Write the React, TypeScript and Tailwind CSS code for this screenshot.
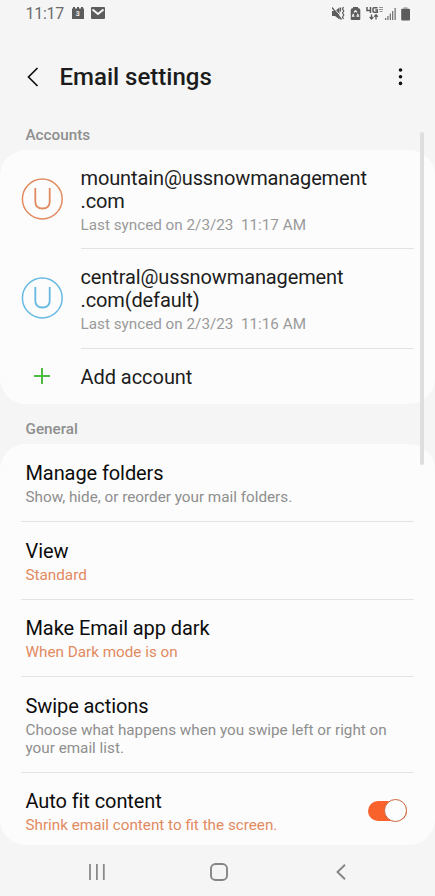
import type { ReactNode } from 'react';

function StatusIcons() {
  return (
    <svg width="80" height="16" viewBox="0 0 80 16" fill="#5c5c5c">
      <path d="M0 5h3l4.500-3.500v12L3 10H0z" />
      <path d="M1.500 1.500l9 11" stroke="#f6f6f6" strokeWidth="1" />
      <path d="M0 1.500l9.500 12" stroke="#5c5c5c" strokeWidth="1.300" />
      <path d="M8.500 1.500v4M11.500 1l-1 2 1.300 2-1.300 2 1.300 2-1.300 2 1 2" fill="none" stroke="#5c5c5c" strokeWidth="1.200" />
      <path d="M21 1h5v1.300h1.300L28.300 4v9a1 1 0 0 1-1 1h-7.600a1 1 0 0 1-1-1V4l1-1.700H21z" />
      <path d="M22 6.300l1.500-1.600 1.500 1.600M21.500 7.800l-1 2.400h2M25.500 7.800l1 2.400h-2" fill="none" stroke="#f6f6f6" strokeWidth="1.200" />
      <path d="M35 1v3.500h4M38.500 1v6M45.500 1.700H42q-1 0-1 1v2.600q0 1 1 1h3.300V4h-2" fill="none" stroke="#5c5c5c" strokeWidth="1.500" />
      <path d="M47 1.500h4M47 3.500h4M47.500 5.500h3" stroke="#929292" strokeWidth="1" />
      <path d="M39.500 8.500v4.500M37.700 11l1.800 2 1.800-2M44 13.500V9M42.200 10.800l1.800-2 1.800 2" fill="none" stroke="#5c5c5c" strokeWidth="1.300" />
      <path d="M53 12h1.300v2H53zM55.300 10h1.300v4h-1.300zM57.700 7.500H59V14h-1.300zM60 5h1.300v9H60zM62.500 2h1.300v12h-1.300z" fill="#777" />
      <path d="M71.500 1h4v2h-4z" fill="#bbb" />
      <rect x="69.200" y="2.800" width="8.800" height="11.700" rx="1" />
    </svg>
  );
}

function Account({ name, rest, time, color, spacing }: { name: string; rest: string; time: string; color: string; spacing: string }) {
  return (
    <div className="flex">
      <div className="flex w-[80.500px] shrink-0 items-center pb-[2px] pl-[21px]">
        <svg width="42" height="42" viewBox="0 0 42 42" fill="none" stroke={color}>
          <circle cx="21.300" cy="21" r="19.900" strokeWidth="1.500" />
          <path d="M14.300 10v13.500q0 7 7.200 7t7.200-7V10" strokeWidth="1.800" />
        </svg>
      </div>
      <div className={`mr-[21px] flex-1 border-b border-[#e2e2e2] pt-[17px] whitespace-nowrap ${spacing}`}>
        <div className="text-[20px] leading-[23px] tracking-[-0.120px] text-[#1d1d1d]">{name}<br />{rest}</div>
        <div className="mt-[3px] text-[15.250px] leading-[19px] whitespace-pre text-[#9a9a9a]">{`Last synced on 2/3/23  ${time}`}</div>
      </div>
    </div>
  );
}

function Setting({ title, sub, height, accent, children, last, raised }: { title: string; sub: ReactNode; height: string; accent?: boolean; children?: ReactNode; last?: boolean; raised?: boolean }) {
  return (
    <div className={`mr-[21px] ml-[21px] flex pl-[4.500px] whitespace-nowrap ${height} ${last ? '' : 'border-b border-[#e4e4e4]'}`}>
      <div className={`flex-1 ${last || raised ? 'pt-[16px]' : 'pt-[17px]'}`}>
        <div className="text-[20px] leading-6 tracking-[-0.090px] text-[#0c0c0c]">{title}</div>
        <div className={`mt-[3px] text-[15.250px] leading-[18px] ${accent ? 'text-[#e28a5f]' : 'text-[#8e8e8e]'}`}>{sub}</div>
      </div>
      {children}
    </div>
  );
}

export default function App() {
  return (
    <div className="relative flex h-[896px] w-[435px] flex-col overflow-hidden bg-[#f5f5f5] font-['Roboto',sans-serif]">
      <div className="flex h-[28px] items-center pl-[25.500px] text-[#6c6c6c]">
        <span className="w-[46.500px] text-[16px] leading-[28px] tracking-[-0.250px]">11:17</span>
        <svg width="34" height="14" viewBox="0 0 34 14" fill="#5c5c5c">
          <path d="M0 1.500h1V0h2v1.500h2V0h2v1.500h2V0h2v1.500h1V12H0z" />
          <text x="3.800" y="9.300" fontSize="7" fontWeight="700" fill="#ececec">3</text>
          <rect x="19" y="0" width="14" height="12" rx="1" />
          <path d="M20.500 2.500L26 7l5.500-4.500" fill="none" stroke="#f6f6f6" strokeWidth="2" />
        </svg>
        <div className="mr-[23px] ml-auto"><StatusIcons /></div>
      </div>
      <header className="flex h-[98px] items-center pl-[27px]">
        <svg width="12" height="20" viewBox="0 0 12 20" fill="none" stroke="#111" strokeWidth="1.700"><path d="M10.500 1L1.500 10l9 9" /></svg>
        <h1 className="ml-[20.500px] text-[24px] leading-8 font-medium text-[#1c1c1c]">Email settings</h1>
        <svg className="mr-[32px] ml-auto" width="5" height="18" viewBox="0 0 5 18" fill="#111"><circle cx="2.500" cy="2" r="1.800" /><circle cx="2.500" cy="8.700" r="1.800" /><circle cx="2.500" cy="15.400" r="1.800" /></svg>
      </header>
      <h2 className="h-[24px] pl-[25.500px] text-[15.250px] leading-[19px] font-medium text-[#8e8e8e]">Accounts</h2>
      <section className="h-[254px] rounded-[26px] bg-[#fcfcfc]">
        <Account name="mountain@ussnowmanagement" rest=".com" time="11:17 AM" color="#e28a5f" spacing="pb-[13px]" />
        <Account name="central@ussnowmanagement" rest=".com(default)" time="11:16 AM" color="#66b9e2" spacing="pb-[14px]" />
        <div className="flex h-[55px] items-center pl-[33px]">
          <svg className="-mt-px" width="18" height="18" viewBox="0 0 18 18" stroke="#4fb944" strokeWidth="2"><path d="M9 1v16M1 9h16" /></svg>
          <span className="ml-[29.500px] text-[20px] tracking-[-0.050px] text-[#1d1d1d]">Add account</span>
        </div>
      </section>
      <h2 className="h-[40px] pt-[16px] pl-[25.500px] text-[15.250px] leading-[19px] font-medium text-[#8e8e8e]">General</h2>
      <section className="h-[401px] rounded-[26px] bg-[#fcfcfc]">
        <Setting title="Manage folders" sub="Show, hide, or reorder your mail folders." height="h-[78px]" />
        <Setting title="View" sub="Standard" height="h-[78px]" accent />
        <Setting title="Make Email app dark" sub="When Dark mode is on" height="h-[77px]" accent raised />
        <Setting title="Swipe actions" sub={<>Choose what happens when you swipe left or right on<br />your email list.</>} height="h-[96px]" />
        <Setting title="Auto fit content" sub="Shrink email content to fit the screen." height="h-[72px]" accent last>
          <div className="mt-[26px] mr-[7px] flex h-[23px] w-[39px] items-center justify-end">
            <div className="flex h-[20px] w-[39px] items-center justify-end rounded-full bg-[#fa622c]">
              <div className="h-[23px] w-[23px] shrink-0 rounded-full border border-[#c9643d] bg-[#fdfdfd]" />
            </div>
          </div>
        </Setting>
      </section>
      <nav className="flex h-[51px] items-center pt-[3px]">
        <svg className="ml-[88px]" width="17" height="16" viewBox="0 0 17 16" stroke="#8a8a8a" strokeWidth="1.800"><path d="M2 0v16M8.900 0v16M15.800 0v16" /></svg>
        <svg className="ml-[105px]" width="18" height="18" viewBox="0 0 18 18" fill="none" stroke="#858585" strokeWidth="1.900"><rect x="1" y="1" width="16" height="16" rx="4.500" /></svg>
        <svg className="ml-[108px]" width="10" height="16" viewBox="0 0 10 16" fill="none" stroke="#858585" strokeWidth="1.900"><path d="M9 .8L1.500 8 9 15.200" /></svg>
      </nav>
      <div className="absolute top-[132px] left-[420px] h-[333px] w-[4px] rounded-full bg-[#dedede]" />
    </div>
  );
}
